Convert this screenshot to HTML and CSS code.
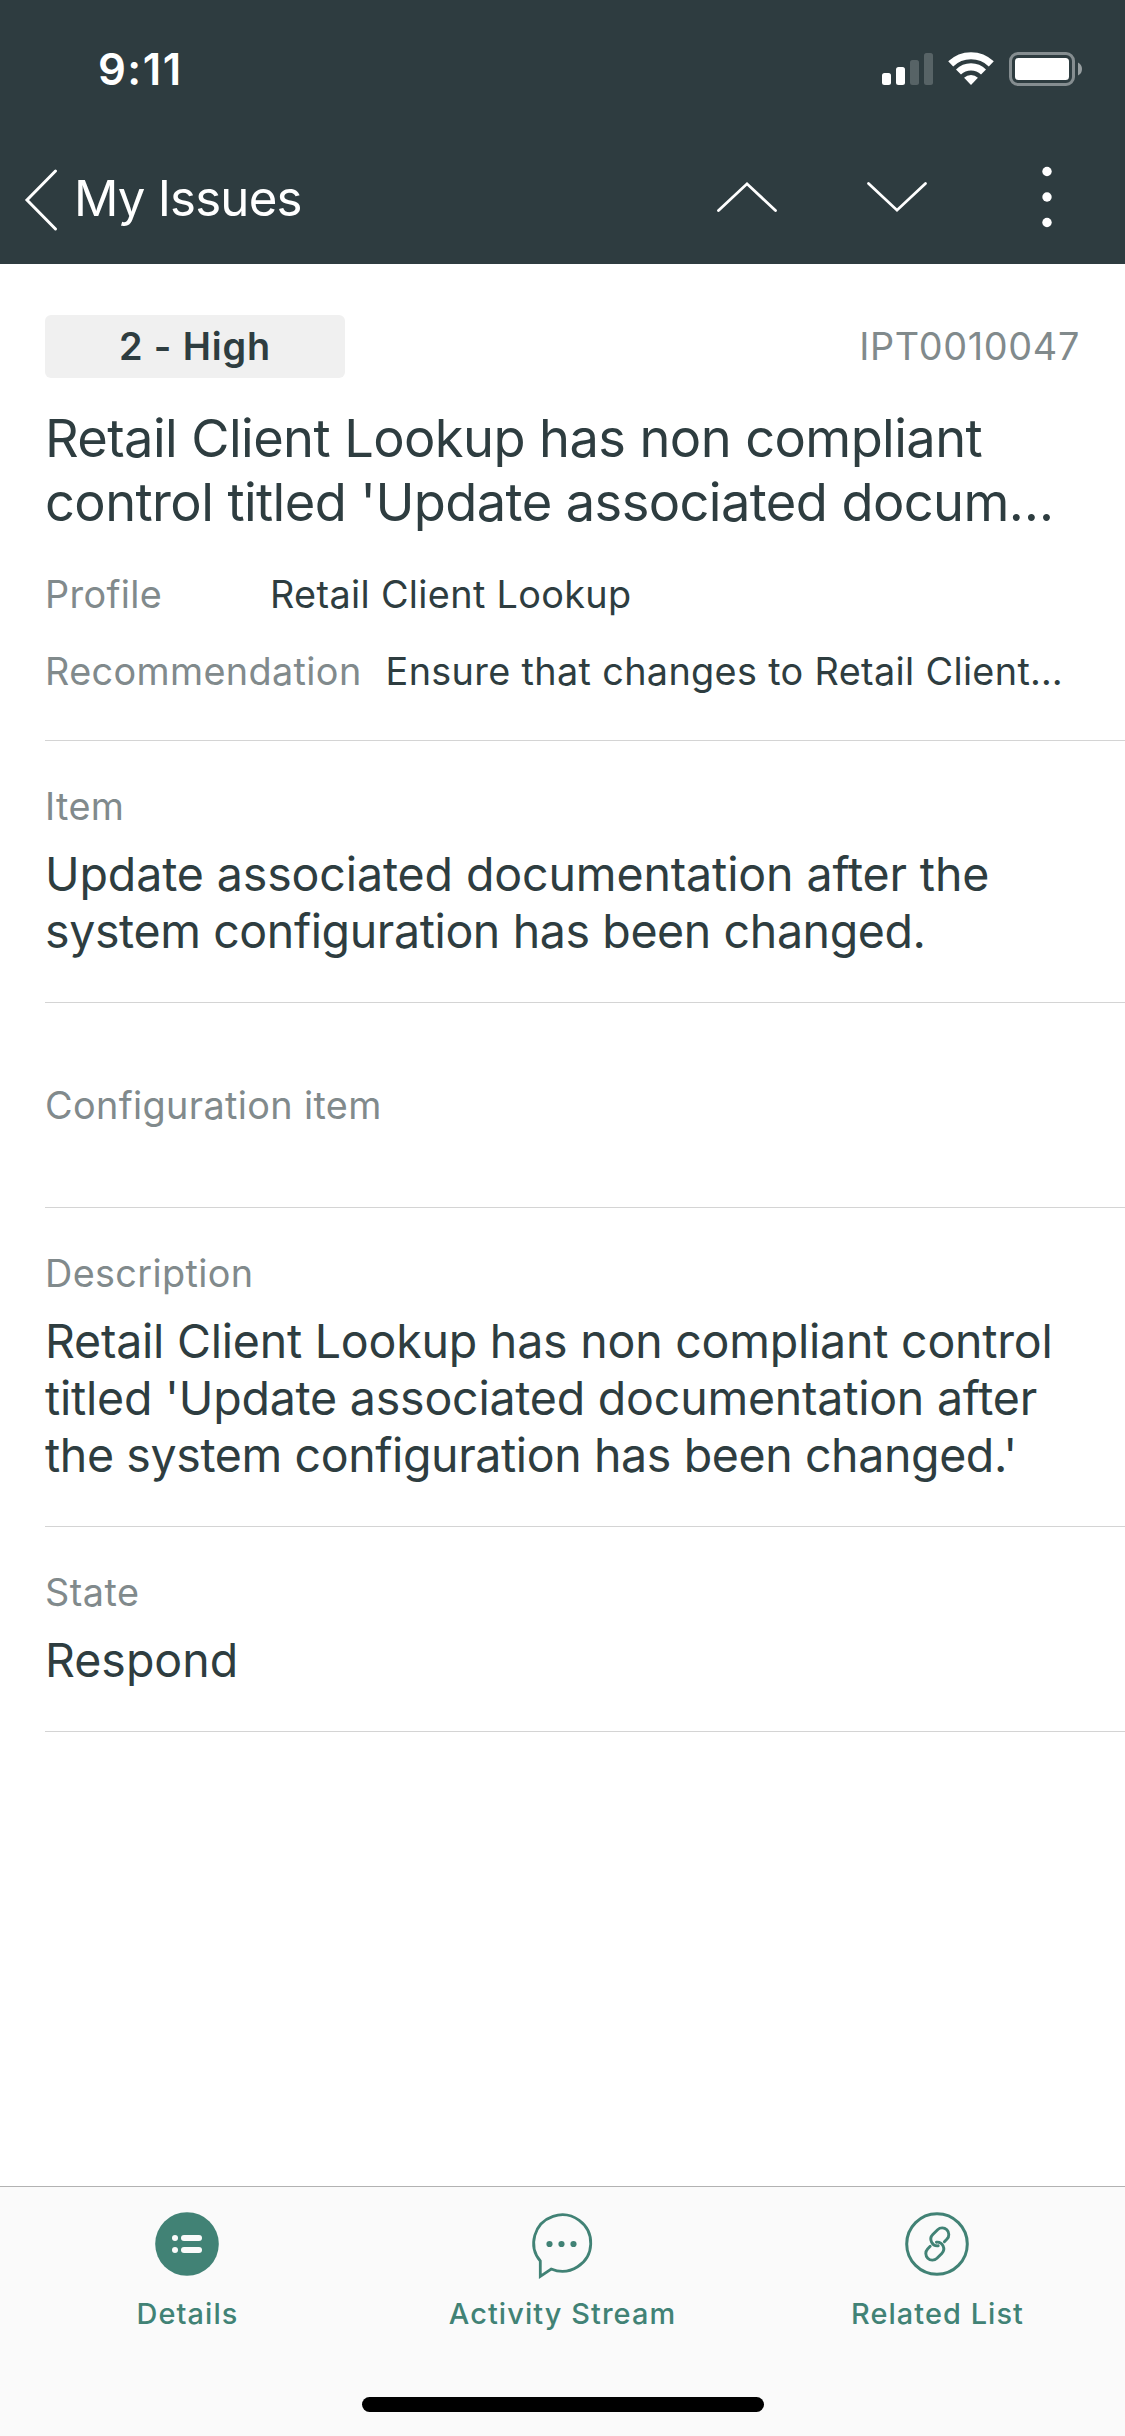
FILE: index.html
```html
<!DOCTYPE html>
<html lang="en">
<head>
<meta charset="utf-8">
<title>My Issues</title>
<link rel="stylesheet" href="styles.css">
</head>
<body>
<div class="screen">
  <header class="header">
    <div class="status">
      <span class="time">9:11</span>
      <svg class="status-icons" width="200" height="34" viewBox="0 0 200 34" fill="#fff">
        <rect x="0" y="21" width="9" height="12" rx="2.5"/>
        <rect x="14" y="15" width="9" height="18" rx="2.5"/>
        <rect x="28" y="8" width="9" height="25" rx="2.5" opacity=".2"/>
        <rect x="42" y="1" width="9" height="32" rx="2.5" opacity=".2"/>
        <g fill="none" stroke="#fff" stroke-width="7.2">
          <path d="M68.7 11.9A29.3 29.3 0 0 1 109.3 11.9"/>
          <path d="M76.5 20A18 18 0 0 1 101.5 20"/>
        </g>
        <path d="M89 33L82.1 25.8A10 10 0 0 1 95.9 25.8Z"/>
        <rect x="128.5" y="1.5" width="63" height="31" rx="7.5" fill="none" stroke="#fff" stroke-width="3" opacity=".42"/>
        <rect x="133" y="6" width="54" height="22" rx="3.5"/>
        <path d="M196 10.5Q200 12.5 200 17T196 23.5Z" opacity=".5"/>
      </svg>
    </div>
    <nav class="nav">
      <a class="back">
        <svg width="34" height="62" viewBox="0 0 34 62" fill="none" stroke="#fff" stroke-width="3" stroke-linecap="round"><path d="M30.500 2L2 31L30.500 60"/></svg>
        <span>My Issues</span>
      </a>
      <div class="actions">
        <span class="action"><svg width="60" height="32" viewBox="0 0 60 32" fill="none" stroke="#fff" stroke-width="2.800" stroke-linecap="round"><path d="M1.500 28.500L30 1.800L58.500 28.500"/></svg></span>
        <span class="action"><svg width="60" height="32" viewBox="0 0 60 32" fill="none" stroke="#fff" stroke-width="2.800" stroke-linecap="round"><path d="M1.500 1.500L30 28.200L58.500 1.500"/></svg></span>
        <span class="action"><svg width="10" height="62" viewBox="0 0 10 62" fill="#fff"><circle cx="5" cy="4.500" r="4.700"/><circle cx="5" cy="30" r="4.700"/><circle cx="5" cy="55.500" r="4.700"/></svg></span>
      </div>
    </nav>
  </header>

  <main class="content">
    <section class="summary">
      <div class="summary-top">
        <span class="badge">2 - High</span>
        <span class="number">IPT0010047</span>
      </div>
      <h1 class="title">Retail Client Lookup has non compliant<br>control titled 'Update associated docum…</h1>
      <div class="pair"><span class="label">Profile</span><span class="pair-value">Retail Client Lookup</span></div>
      <div class="pair"><span class="label">Recommendation</span><span class="pair-value">Ensure that changes to Retail Client…</span></div>
    </section>
    <section class="field">
      <div class="label">Item</div>
      <div class="value"><span class="line loose">Update associated documentation after the</span> <span class="line tight">system configuration has been changed.</span></div>
    </section>
    <section class="field empty">
      <div class="label">Configuration item</div>
    </section>
    <section class="field">
      <div class="label">Description</div>
      <div class="value"><span class="line">Retail Client Lookup has non compliant control</span> <span class="line">titled 'Update associated documentation after</span> <span class="line tight">the system configuration has been changed.'</span></div>
    </section>
    <section class="field">
      <div class="label state-label">State</div>
      <div class="value respond">Respond</div>
    </section>
  </main>

  <footer class="tabbar">
    <div class="tabs">
      <a class="tab">
        <svg width="67" height="66" viewBox="0 0 67 66"><circle cx="33" cy="33" r="31.800" fill="#418275"/><g fill="#fafafa"><circle cx="21" cy="27" r="3"/><circle cx="21" cy="39" r="3"/><rect x="27" y="24" width="21" height="6" rx="3"/><rect x="27" y="36" width="21" height="6" rx="3"/></g></svg>
        <span>Details</span>
      </a>
      <a class="tab">
        <svg width="67" height="66" viewBox="0 0 67 66" fill="none" stroke="#418275" stroke-width="2.800"><path d="M11.300 50A28.500 28.200 0 1 1 22.200 58L11.300 65.300Z"/><g fill="#418275" stroke="none"><circle cx="20.500" cy="33" r="3.100"/><circle cx="32.500" cy="33" r="3.100"/><circle cx="44.500" cy="33" r="3.100"/></g></svg>
        <span>Activity Stream</span>
      </a>
      <a class="tab">
        <svg width="67" height="66" viewBox="0 0 67 66" fill="none" stroke="#418275" stroke-width="3"><circle cx="33" cy="33" r="30.300"/><g stroke-width="2.900" stroke-linecap="round"><path d="M40.400 30.700L43 28.100A6.650 6.650 0 0 0 33.600 18.700L28.800 23.600A6.600 6.600 0 0 0 34.200 34.800"/><path d="M26.200 35.300L23.600 37.900A6.650 6.650 0 0 0 33 47.300L37.800 42.400A6.600 6.600 0 0 0 32.400 31.200"/></g></svg>
        <span>Related List</span>
      </a>
    </div>
    <div class="home-bar"></div>
  </footer>
</div>
</body>
</html>
```
FILE: styles.css
```css
* { box-sizing: border-box; }

body {
  margin: 0;
  background: #fff;
  color: #2e3d40;
  font-family: Inter, "Liberation Sans", sans-serif;
}

svg { display: block; flex: none; overflow: visible; }

.screen {
  width: 1125px;
  height: 2436px;
  display: flex;
  flex-direction: column;
}

.header { height: 264px; background: #2e3c40; color: #fff; }

.status {
  height: 132px;
  padding: 6px 43px 0 98px;
  display: flex;
  align-items: center;
  justify-content: space-between;
}

.time { font-size: 43.6px; font-weight: 600; letter-spacing: 1.49px; }

.nav {
  height: 132px;
  padding: 0 3px 0 25px;
  display: flex;
  align-items: center;
  justify-content: space-between;
}

.back {
  display: flex;
  align-items: center;
  gap: 15px;
  padding-top: 3px;
  font-size: 49.2px;
  letter-spacing: -.82px;
  line-height: 60px;
}

.back span { margin-top: -3px; }

.actions { display: flex; }

.action {
  width: 150px;
  height: 130px;
  display: flex;
  align-items: center;
  justify-content: center;
}

.content { flex: 1; }

.summary {
  height: 477px;
  margin-left: 45px;
  padding: 51px 45px 0 0;
  border-bottom: 1px solid #d4d4d4;
}

.summary-top {
  height: 63px;
  display: flex;
  align-items: center;
  justify-content: space-between;
}

.badge {
  width: 300px;
  height: 63px;
  border-radius: 6px;
  background: #f0f0f0;
  text-align: center;
  font-size: 37.8px;
  font-weight: 600;
  line-height: 63px;
  letter-spacing: .84px;
}

.number {
  color: #818a8c;
  font-size: 37.8px;
  line-height: 63px;
  letter-spacing: .68px;
}

.title {
  margin: 28px -20px 22px 0;
  font-size: 52.4px;
  font-weight: 400;
  line-height: 64px;
  letter-spacing: -.59px;
}

.pair {
  display: flex;
  gap: 24px;
  height: 77px;
  font-size: 37.8px;
  line-height: 77px;
  white-space: nowrap;
}

.pair .label { min-width: 201px; line-height: 77px; }
.pair-value { letter-spacing: .34px; }

.label {
  color: #818a8c;
  font-size: 37.8px;
  line-height: 46px;
  letter-spacing: .36px;
}

.state-label { letter-spacing: .5px; }

.field {
  margin-left: 45px;
  padding: 42px 0;
  border-bottom: 1px solid #d4d4d4;
  display: flex;
  flex-direction: column;
  gap: 17px;
}

.field.empty { height: 205px; padding: 0; justify-content: center; }

.value {
  font-size: 46.5px;
  line-height: 57px;
  letter-spacing: -.22px;
  white-space: nowrap;
}

.line { display: block; }
.loose { letter-spacing: -.12px; }
.tight { letter-spacing: -.39px; }
.respond { letter-spacing: 0; }

.tabbar {
  height: 250px;
  border-top: 1px solid #b2b2b2;
  background: #fafafa;
}

.tabs { display: flex; height: 210px; }

.tab {
  flex: 1;
  padding-top: 24px;
  display: flex;
  flex-direction: column;
  align-items: center;
  gap: 18px;
  color: #418275;
  font-size: 28.9px;
  font-weight: 500;
  line-height: 37px;
  letter-spacing: 1.08px;
}

.home-bar {
  width: 402px;
  height: 15px;
  margin: 0 auto;
  border-radius: 7.5px;
  background: #000;
}
```
